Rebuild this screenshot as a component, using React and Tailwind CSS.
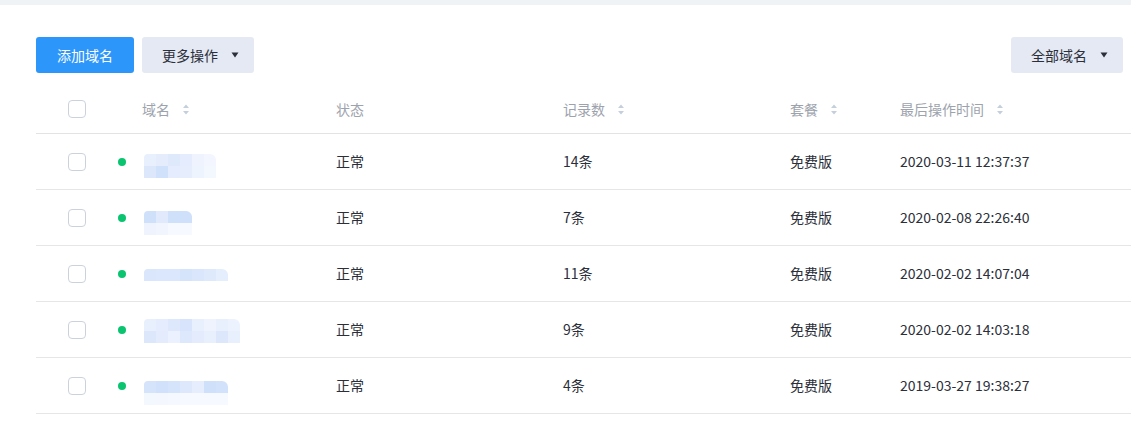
import React from 'react';

const ROWS = [
    {
        status: '正常', records: '14条', plan: '免费版', time: '2020-03-11 12:37:37', shift: 'mt-[8px]',
        pixels: [
            ['#e8effd', '#e5edfd', '#dfe9fc', '#e4ecfd', '#eef3fe', '#f3f6fe'],
            ['#dce7fc', '#cfe1fb', '#e4ecfd', '#e6eefd', '#eef4fe', '#f3f7fe'],
        ],
    },
    {
        status: '正常', records: '7条', plan: '免费版', time: '2020-02-08 22:26:40', shift: 'mt-[10px]',
        pixels: [
            ['#cfe0fb', '#e0eafc', '#cfe0fb', '#cfe0fb'],
            ['#eef3fe', '#f0f5fe', '#f6f9ff', '#f6f9ff'],
        ],
    },
    {
        status: '正常', records: '11条', plan: '免费版', time: '2020-02-02 14:07:04', shift: 'mt-[2px]',
        pixels: [
            ['#d9e6fc', '#dbe7fc', '#dbe7fc', '#d5e3fb', '#d9e6fc', '#dfe9fc', '#e5eefd'],
        ],
    },
    {
        status: '正常', records: '9条', plan: '免费版', time: '2020-02-02 14:03:18', shift: 'mt-[2px]',
        pixels: [
            ['#e8effd', '#e4ecfd', '#dde8fc', '#d7e4fb', '#e9f0fd', '#eef3fe', '#e9f0fd', '#edf3fe'],
            ['#dce7fc', '#e3ebfd', '#ebf1fe', '#dee8fc', '#e3ebfd', '#e8effd', '#dce7fc', '#e8effd'],
        ],
    },
    {
        status: '正常', records: '4条', plan: '免费版', time: '2019-03-27 19:38:27', shift: 'mt-[14px]',
        pixels: [
            ['#d5e3fb', '#d1e1fb', '#d5e3fb', '#dde8fc', '#e6eefd', '#cfe0fb', '#d3e2fb'],
            ['#f3f7fe', '#f4f8fe', '#f5f8ff', '#f6f9ff', '#f6f9ff', '#f6f9ff', '#f6f9ff'],
        ],
    },
];

const GRID = 'grid grid-cols-[106px_194px_227px_227px_110px_1fr] items-center';

function Caret() {
    return (
        <svg width="8" height="6" viewBox="0 0 8 6" className="text-[#2b2f3a]">
            <path d="M0.5 0.5h7L4 5.5z" fill="currentColor" />
        </svg>
    );
}

function SortIcon() {
    return (
        <svg width="6" height="11" viewBox="0 0 6 11" className="ml-[13px] text-[#c5cfdc]">
            <path d="M3 0.5L6 4H0z" fill="currentColor" />
            <path d="M3 10.5L6 7H0z" fill="currentColor" />
        </svg>
    );
}

function Checkbox() {
    return <div className="w-[18px] h-[18px] rounded-[4px] border border-[#ccd2dd] bg-white" />;
}

function Blurred({ pixels, shift }) {
    return (
        <div className={`flex flex-col ml-[2px] rounded-tr-[6px] rounded-tl-[4px] overflow-hidden ${shift}`}>
            {pixels.map((row, i) => (
                <div key={i} className="flex">
                    {row.map((c, j) => (
                        <div key={j} className="w-[12px] h-[12px]" style={{ backgroundColor: c }} />
                    ))}
                </div>
            ))}
        </div>
    );
}

function HeaderCell({ label, sortable }) {
    return (
        <div className="flex items-center text-[#9da3ad]">
            <span>{label}</span>
            {sortable && <SortIcon />}
        </div>
    );
}

export default function App() {
    return (
        <div className="min-h-[430px] bg-white text-[14px] text-[#2b2f3a] font-['Noto_Sans_CJK_SC','Microsoft_YaHei',sans-serif]">
            <div className="h-[5px] bg-[#f0f3f6]" />

            <div className="pl-[36px]">
                {/* Toolbar */}
                <div className="flex items-center justify-between pr-[8px] mt-[32px]">
                    <div className="flex gap-[8px]">
                        <button className="h-[36px] w-[98px] rounded-[3px] bg-[#2d96fa] text-white">添加域名</button>
                        <button className="h-[36px] w-[112px] rounded-[3px] bg-[#e4e9f3] flex items-center pl-[20px] gap-[13px]">
                            <span>更多操作</span>
                            <Caret />
                        </button>
                    </div>
                    <button className="h-[36px] w-[112px] rounded-[3px] bg-[#e4e9f3] flex items-center pl-[20px] gap-[13px]">
                        <span>全部域名</span>
                        <Caret />
                    </button>
                </div>

                {/* Table */}
                <div className="mt-[12px]">
                    <div className={`${GRID} h-[49px] border-b border-[#e3e3e3]`}>
                        <div className="pl-[32px]"><Checkbox /></div>
                        <HeaderCell label="域名" sortable />
                        <HeaderCell label="状态" />
                        <HeaderCell label="记录数" sortable />
                        <HeaderCell label="套餐" sortable />
                        <HeaderCell label="最后操作时间" sortable />
                    </div>

                    {ROWS.map((r, i) => (
                        <div key={i} className={`${GRID} h-[56px] border-b border-[#e6e6e6]`}>
                            <div className="flex items-center pl-[32px] gap-[32px]">
                                <Checkbox />
                                <span className="w-[8px] h-[8px] rounded-full bg-[#0bc46f]" />
                            </div>
                            <div className="flex items-center">
                                <Blurred pixels={r.pixels} shift={r.shift} />
                            </div>
                            <div>{r.status}</div>
                            <div>{r.records}</div>
                            <div>{r.plan}</div>
                            <div>{r.time}</div>
                        </div>
                    ))}
                </div>
            </div>
        </div>
    );
}
